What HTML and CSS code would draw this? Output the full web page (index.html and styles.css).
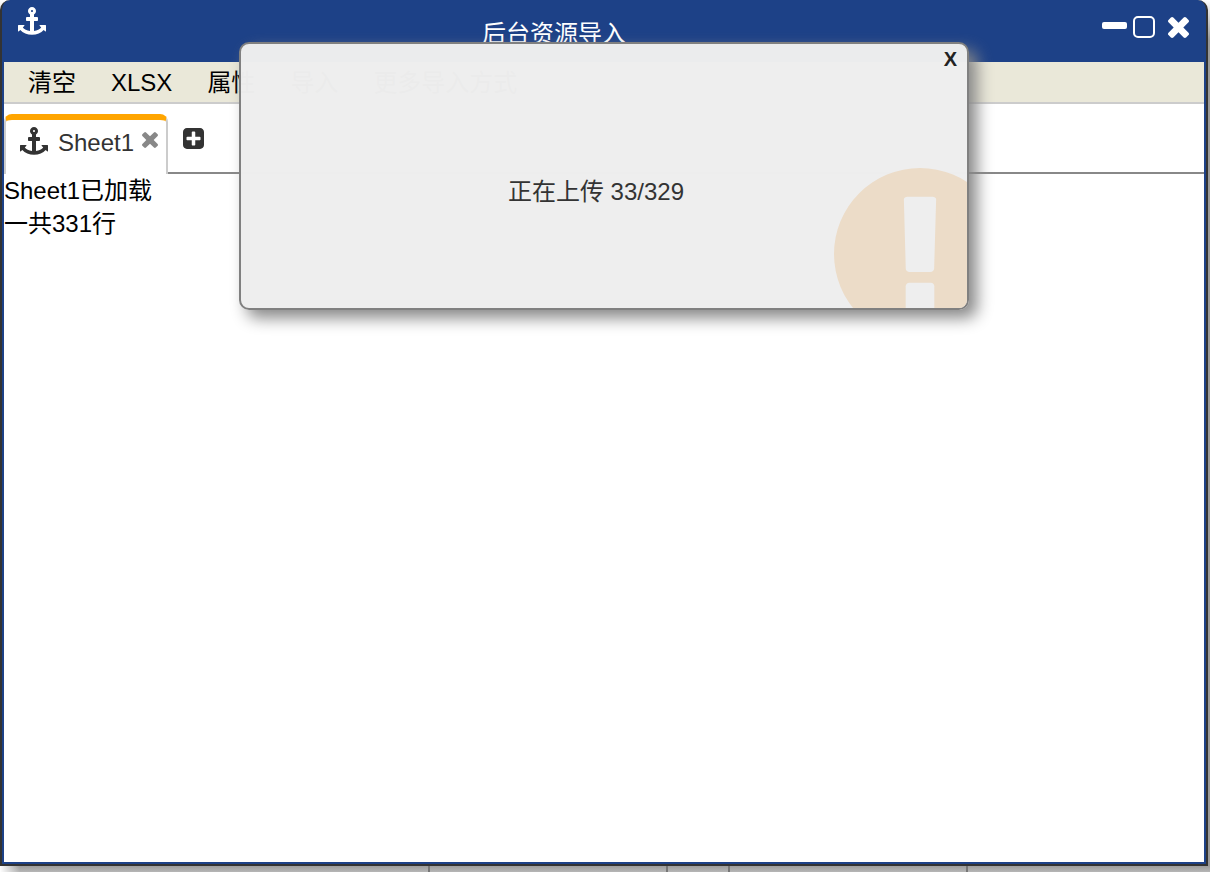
FILE: index.html
```html
<!DOCTYPE html>
<html lang="zh-CN">
<head>
<meta charset="utf-8">
<title>后台资源导入</title>
<link rel="stylesheet" href="styles.css">
</head>
<body>
<svg class="defs" aria-hidden="true">
  <symbol id="anchor" viewBox="0 0 1792 1792"><path d="M960 256q0-26-19-45t-45-19-45 19-19 45 19 45 45 19 45-19 19-45zm832 928v352q0 22-20 30-8 2-12 2-13 0-23-9l-93-93q-119 143-318.500 226.500t-429.500 83.500-429.500-83.500-318.500-226.500l-93 93q-9 9-23 9-4 0-12-2-20-8-20-30v-352q0-14 9-23t23-9h352q22 0 30 20 8 19-7 35l-100 100q67 91 189.500 153.500t271.500 82.500v-647h-192q-26 0-45-19t-19-45v-128q0-26 19-45t45-19h192v-163q-58-34-93-92.500t-35-128.500q0-106 75-181t181-75 181 75 75 181q0 70-35 128.500t-93 92.500v163h192q26 0 45 19t19 45v128q0 26-19 45t-45 19h-192v647q149-20 271.500-82.500t189.500-153.500l-100-100q-15-16-7-35 8-20 30-20h352q14 0 23 9t9 23z"/></symbol>
  <symbol id="times" viewBox="302 366 1188 1188"><path d="M1490 1322q0 40-28 68l-136 136q-28 28-68 28t-68-28l-294-294-294 294q-28 28-68 28t-68-28l-136-136q-28-28-28-68t28-68l294-294-294-294q-28-28-28-68t28-68l136-136q28-28 68-28t68 28l294 294 294-294q28-28 68-28t68 28l136 136q28 28 28 68t-28 68l-294 294 294 294q28 28 28 68z"/></symbol>
  <symbol id="plus" viewBox="128 128 1536 1536"><path d="M1408 960v-128q0-26-19-45t-45-19h-320v-320q0-26-19-45t-45-19h-128q-26 0-45 19t-19 45v320h-320q-26 0-45 19t-19 45v128q0 26 19 45t45 19h320v320q0 26 19 45t45 19h128q26 0 45-19t19-45v-320h320q26 0 45-19t19-45zm256-544v960q0 119-84.500 203.500t-203.500 84.500h-960q-119 0-203.500-84.500t-84.500-203.500v-960q0-119 84.500-203.500t203.500-84.500h960q119 0 203.500 84.500t84.500 203.500z"/></symbol>
  <symbol id="warn" viewBox="128 128 1536 1536"><path fill-rule="evenodd" d="M896 128a768 768 0 1 0 0 1536a768 768 0 1 0 0-1536zm128 1247v-190q0-14-9-23.500t-22-9.500h-192q-13 0-23 10t-10 23v190q0 13 10 23t23 10h192q13 0 22-9.500t9-23.500zm-2-344l18-621q0-12-10-18-10-8-24-8h-220q-14 0-24 8-10 6-10 18l17 621q0 10 10 17.500t24 7.500h185q14 0 23.500-7.500t10.500-17.500z"/></symbol>
</svg>
<main class="window">
  <header class="titlebar">
    <svg class="icon-anchor"><use href="#anchor"/></svg>
    <h1 class="title">后台资源导入</h1>
    <div class="controls">
      <button class="minimize" aria-label="最小化"></button>
      <button class="maximize" aria-label="最大化"></button>
      <button class="close" aria-label="关闭"><svg><use href="#times"/></svg></button>
    </div>
  </header>
  <nav class="menu">
    <button>清空</button>
    <button>XLSX</button>
    <button>属性</button>
    <button>导入</button>
    <button>更多导入方式</button>
  </nav>
  <div class="tabs">
    <div class="tab">
      <svg class="icon-anchor"><use href="#anchor"/></svg>
      <button class="tab-label">Sheet1</button>
      <button class="tab-close" aria-label="关闭 Sheet1"><svg><use href="#times"/></svg></button>
    </div>
    <div class="tab-rest">
      <button class="tab-add" aria-label="新建"><svg><use href="#plus"/></svg></button>
    </div>
  </div>
  <section class="log">
    <p>Sheet1已加载</p>
    <p>一共331行</p>
  </section>
  <div class="dialog" role="dialog" aria-label="上传进度">
    <svg class="dialog-mark"><use href="#warn"/></svg>
    <button class="dialog-close">X</button>
    <p class="message">正在上传 33/329</p>
  </div>
</main>
</body>
</html>
```
FILE: styles.css
```css
* { box-sizing: border-box; }

body {
  margin: 0;
  min-height: 100vh;
  padding: 0 2px 6px 0;
  display: flex;
  font: 24px/32px "Liberation Sans", "Noto Sans CJK SC", sans-serif;
  color: #000;
  background:
    linear-gradient(90deg, #fff, transparent 20px) bottom left / 100% 6px no-repeat,
    linear-gradient(#777, #777) 428px 100% / 2px 6px no-repeat,
    linear-gradient(#777, #777) 666px 100% / 2px 6px no-repeat,
    linear-gradient(#777, #777) 728px 100% / 2px 6px no-repeat,
    linear-gradient(#777, #777) 966px 100% / 2px 6px no-repeat,
    linear-gradient(#9d9d9d, #b6b6b6) bottom / 100% 6px no-repeat,
    linear-gradient(#fff, #999 40px);
}

button {
  display: flex;
  margin: 0;
  padding: 0;
  border: 0;
  background: none;
  font: inherit;
  color: inherit;
  cursor: pointer;
}

svg { display: block; fill: currentColor; }
h1, p { margin: 0; }

.defs { position: absolute; width: 0; height: 0; }
.icon-anchor { width: 28px; height: 28px; flex: none; }

.window {
  position: relative;
  flex: 1;
  display: flex;
  flex-direction: column;
  border: 2px solid #333;
  border-top: 0;
  border-radius: 10px 10px 0 0;
  background: #1d4187;
  padding: 0 2px 2px;
}

.titlebar {
  display: flex;
  align-items: flex-start;
  height: 62px;
  padding: 7px 15px 0 14px;
  color: #fff;
}

.title {
  flex: 1;
  padding-top: 11px;
  font-size: 24px;
  font-weight: 400;
  text-align: center;
}

.controls {
  display: flex;
  align-items: center;
  margin-left: 40px;
  padding-top: 9px;
}

.minimize {
  width: 25px;
  height: 7px;
  margin: 0 6px 3px 0;
  border-radius: 2px;
  background: #fff;
}

.maximize {
  width: 22px;
  height: 22px;
  margin-right: 13px;
  border: 2px solid #fff;
  border-radius: 5px;
}

.close { padding-top: 1px; }
.close svg { width: 21px; height: 21px; }

.menu {
  display: flex;
  gap: 35px;
  height: 42px;
  padding: 5px 24px 3px;
  background: #eae8d9;
  border-bottom: 2px solid #ccc;
  white-space: nowrap;
}

.tabs {
  display: flex;
  height: 70px;
  padding-top: 10px;
  background: #fff;
  color: #333;
}

.tab {
  display: flex;
  align-items: flex-start;
  width: 164px;
  padding: 7px 8px 0 14px;
  border: 2px solid #ccc;
  border-top: 6px solid orange;
  border-bottom: 0;
  border-radius: 8px 8px 0 0;
}

.tab-label { margin: 0 auto 0 10px; }
.tab-close { margin-top: 5px; color: #888; }
.tab-close svg { width: 16px; height: 16px; }

.tab-rest {
  flex: 1;
  padding: 14px 15px 0;
  border-bottom: 2px solid #888;
}

.tab-add svg { width: 21px; height: 21px; }

.log {
  flex: 1;
  background: #fff;
  line-height: 33px;
}

.dialog {
  position: absolute;
  top: 42px;
  left: 50%;
  width: 730px;
  max-width: 90%;
  height: 268px;
  transform: translateX(-50%);
  display: flex;
  align-items: center;
  justify-content: center;
  padding: 32px 16px 0 0;
  overflow: hidden;
  border: 2px solid #808080;
  border-radius: 10px;
  background: rgba(238, 238, 238, .99);
  box-shadow: 8px 8px 16px #888;
  color: #333;
}

.dialog-mark {
  position: absolute;
  right: -39px;
  bottom: -32px;
  width: 172px;
  height: 172px;
  color: #ecdcc8;
}

.dialog-close {
  position: absolute;
  top: 0;
  right: 10px;
  font-size: 20px;
  line-height: 30px;
  font-weight: 700;
  color: #222;
}

.message { position: relative; }
```
